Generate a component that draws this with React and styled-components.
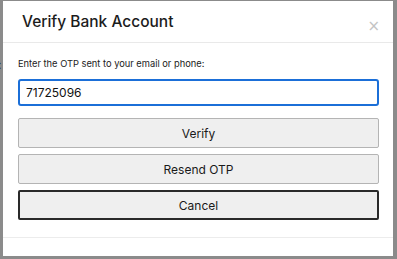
import React, { useState } from "react";
import styled, { createGlobalStyle } from "styled-components";

const GlobalStyle = createGlobalStyle`
  html, body {
    margin: 0;
    padding: 0;
    background: #8b8b8b;
    font-family: Inter, "Liberation Sans", sans-serif;
  }
`;

const Backdrop = styled.div`
  position: relative;
  width: 397px;
  height: 259px;
  padding: 1px 4px 3px 3px;
  box-sizing: border-box;
  overflow: hidden;
`;

// text of the page behind the modal, peeking out at the left edge
const BehindText = styled.span`
  position: absolute;
  left: -2px;
  top: 57px;
  font-size: 12px;
  color: #222;
`;

const Modal = styled.div`
  position: relative;
  height: 100%;
  background: #fff;
  display: flex;
  flex-direction: column;
`;

const Header = styled.div`
  display: flex;
  align-items: center;
  justify-content: space-between;
  height: 41px;
  padding: 0 13px 0 19px;
  border-bottom: 1px solid #e9e9e9;
`;

const Title = styled.h2`
  margin: 0;
  font-size: 15.5px;
  font-weight: 500;
  color: #1c1c1c;
  transform: translateY(0px);
`;

const Close = styled.button`
  border: none;
  background: none;
  padding: 0;
  font-size: 15px;
  line-height: 1;
  color: #c4c4c4;
  font-family: "DejaVu Sans", sans-serif;
  transform: translateY(5px);
`;

const Body = styled.div`
  padding: 15px 14px 0 15px;
  display: flex;
  flex-direction: column;
  height: 179px;
  border-bottom: 1px solid #ececec;
`;

const Label = styled.label`
  font-size: 9.3px;
  color: #222;
  margin-bottom: 10px;
`;

const Input = styled.input`
  height: 27px;
  box-sizing: border-box;
  border: 2px solid #1b6fd8;
  border-radius: 3px;
  padding: 0 6px;
  font-family: Inter, "Liberation Sans", sans-serif;
  font-size: 12px;
  color: #111;
  outline: none;
  margin-bottom: 12px;
`;

const Button = styled.button`
  height: 30px;
  box-sizing: border-box;
  margin-bottom: 6px;
  background: #efefef;
  border: ${(p) => (p.$focused ? "2px solid #2a2a2a" : "1px solid #b4b4b4")};
  border-radius: 2px;
  font-family: Inter, "Liberation Sans", sans-serif;
  font-size: 12px;
  color: #1a1a1a;
  cursor: pointer;
`;

export default function App() {
  const [otp, setOtp] = useState("71725096");
  return (
    <>
      <GlobalStyle />
      <Backdrop>
        <BehindText>:</BehindText>
        <Modal>
          <Header>
            <Title>Verify Bank Account</Title>
            <Close aria-label="Close">×</Close>
          </Header>
          <Body>
            <Label>Enter the OTP sent to your email or phone:</Label>
            <Input value={otp} onChange={(e) => setOtp(e.target.value)} />
            <Button>Verify</Button>
            <Button>Resend OTP</Button>
            <Button $focused>Cancel</Button>
          </Body>
        </Modal>
      </Backdrop>
    </>
  );
}
